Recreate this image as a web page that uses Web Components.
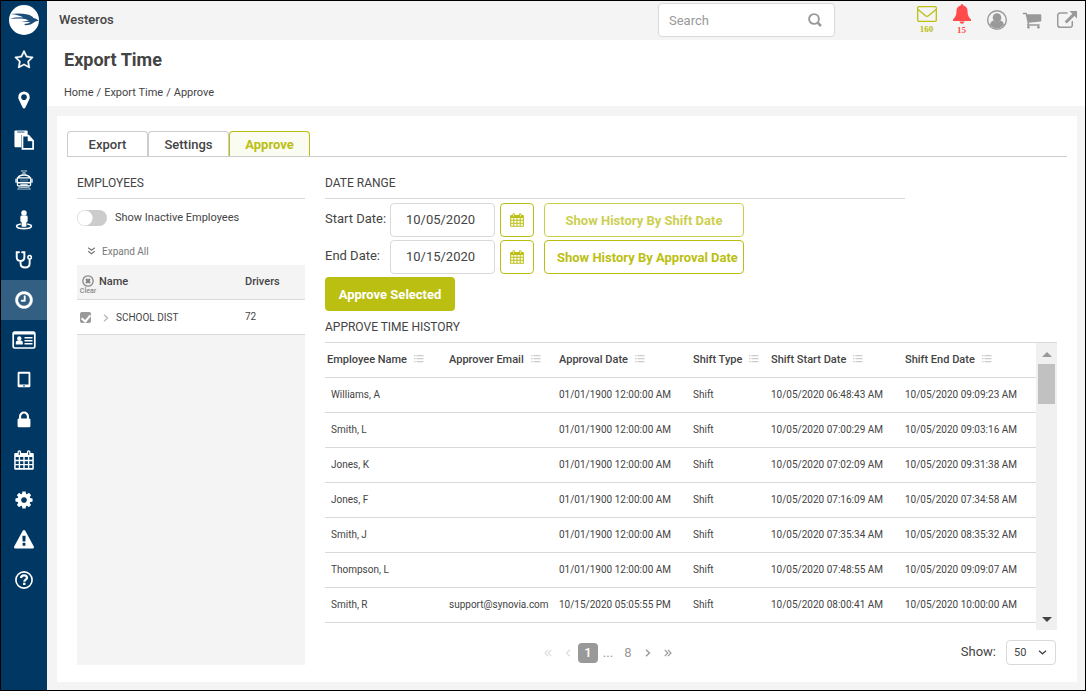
<!DOCTYPE html>
<html lang="en">
<head>
<meta charset="utf-8">
<title>Export Time</title>
<style>
  html { --navy: #003863; --olive: #bbbf12; --line: #d9d9d9; --grey: #f4f4f4; --muted: #999; }
  body { margin: 0; font: 11px/16px Roboto, sans-serif; color: #444; }
</style>
</head>
<body>
<app-shell>
  <side-nav slot="nav"></side-nav>
  <top-bar slot="top">Westeros</top-bar>
  <page-heading slot="heading">Export Time</page-heading>
  <tab-strip></tab-strip>
  <split-view>
    <employee-panel slot="left"></employee-panel>
    <date-range></date-range>
    <history-table></history-table>
    <table-footer></table-footer>
  </split-view>
</app-shell>

<script>
const ICONS = {
  star: ['0 0 1792 1792', '<path d="M1201 1004l306-297-422-62-189-382-189 382-422 62 306 297-73 421 378-199 377 199zm527-357q0 22-26 48l-363 354 86 500q1 7 1 20 0 50-41 50-19 0-40-12l-449-236-449 236q-22 12-40 12-21 0-31.500-14.500t-10.500-35.500q0-6 2-20l86-500-364-354q-25-27-25-48 0-37 56-46l502-73 225-455q19-41 49-41t49 41l225 455 502 73q56 9 56 46z" stroke="currentColor" stroke-width="30"/>'],
  marker: ['0 0 1792 1792', '<path d="M1152 640q0-106-75-181t-181-75-181 75-75 181 75 181 181 75 181-75 75-181zm256 0q0 109-33 179l-364 774q-16 33-47.500 52t-67.500 19-67.500-19-46.500-52l-365-774q-33-70-33-179 0-212 150-362t362-150 362 150 150 362z"/>'],
  paste: ['0 0 22 22', '<path d="M1.500 .5h12.500a1 1 0 0 1 1 1v4h-7v13.500h-6.500a1 1 0 0 1-1-1v-16.500a1 1 0 0 1 1-1z"/><path d="M3.500 1.500h8v1.500h-8z" fill="#5f87a6"/><path d="M9.300 6.300h6.700l5 5.500v8.900h-11.700z" fill="#003863" stroke="currentColor" stroke-width="1.900"/><path d="M15.300 6v6h6z" stroke="currentColor" stroke-width=".5"/>'],
  train: ['0 0 22 22', '<g fill="none" stroke="currentColor"><path d="M7.500 1h7M8.500 1.500l2.500 2 2.500-2M8.500 5l2.500-1.800 2.500 1.800" stroke-width=".9" opacity=".8"/><path d="M4.500 9q.5-3.500 6.500-3.500t6.500 3.500" stroke-width="1.500"/><path d="M3.700 8.700h14.600v7.300q0 1.500-1.500 1.500h-11.600q-1.500 0-1.500-1.500z" stroke-width="1.300"/><path d="M6 18l-1 2.500M16 18l1 2.500M3.500 21h15M6 19.300h10" stroke-width=".9" opacity=".8"/></g><path d="M6.500 10h9v3.500h-9z" opacity=".2"/><path d="M4 13.300h14v1.500h-14zM7 15.800h8v1.500h-8zM1.500 9.500h1.500v4.500h-1.500zM19 9.500h1.500v4.500h-1.500z"/>'],
  street: ['0 0 22 22', '<circle cx="11" cy="3.300" r="3"/><path d="M8.500 6h5q1.500 0 1.500 1.500v5q0 .8-1.300.8v4.200q0 .8-.8.800h-3.800q-.8 0-.8-.8v-4.200q-1.300 0-1.300-.8v-5q0-1.500 1.500-1.500z"/><path d="M7.500 15.300c-8 1.500-5 5.200 3.500 5.200s11.500-3.700 3.500-5.200" fill="none" stroke="currentColor" stroke-width="1.700"/>'],
  steth: ['0 0 22 22', '<g fill="none" stroke="currentColor" stroke-width="2.100" stroke-linecap="round"><path d="M5.500 2.500h-2.500v5.500q0 4 4.200 4t4.200-4v-5.500h-2.500"/><path d="M7.200 12v2.500q0 4.700 5 4.700t5-4.700v-4"/><circle cx="17.200" cy="8" r="1.900" stroke-width="1.700"/></g>'],
  clock: ['0 0 1792 1792', '<path d="M1024 544v448q0 14-9 23t-23 9h-320q-14 0-23-9t-9-23v-64q0-14 9-23t23-9h224v-352q0-14 9-23t23-9h64q14 0 23 9t9 23zm416 352q0-148-73-273t-198-198-273-73-273 73-198 198-73 273 73 273 198 198 273 73 273-73 198-198 73-273zm224 0q0 209-103 385.500t-279.500 279.500-385.500 103-385.500-103-279.500-279.500-103-385.500 103-385.500 279.500-279.500 385.500-103 385.500 103 279.500 279.500 103 385.500z" stroke="currentColor" stroke-width="40"/>'],
  idcard: ['0 0 24 20', '<rect x="1.200" y="2" width="21.600" height="16" rx="1.500" fill="none" stroke="currentColor" stroke-width="1.700"/><path d="M1 2h22v2.500h-22z"/><circle cx="7.300" cy="8.500" r="2.200"/><path d="M3.800 14.500v-2q0-2 2-2h3q2 0 2 2v2zM12.500 7h8v1.400h-8zM12.500 10h8v1.400h-8zM12.500 13h8v1.400h-8z"/>'],
  tablet: ['0 0 22 22', '<path fill-rule="evenodd" d="M5.500 2h11a1.500 1.500 0 0 1 1.500 1.500v14a1.500 1.500 0 0 1-1.500 1.500h-11a1.500 1.500 0 0 1-1.500-1.500v-14a1.500 1.500 0 0 1 1.500-1.500zM6 4v12h10v-12zM10.200 16.900v1.200h1.600v-1.200z"/>'],
  lock: ['0 0 1792 1792', '<path d="M640 768h512v-192q0-106-75-181t-181-75-181 75-75 181v192zm832 96v576q0 40-28 68t-68 28h-960q-40 0-68-28t-28-68v-576q0-40 28-68t68-28h32v-192q0-184 132-316t316-132 316 132 132 316v192h32q40 0 68 28t28 68z"/>'],
  calendar: ['0 0 20 20', '<path fill-rule="evenodd" d="M1.500 3h2v-1a1.800 1.800 0 0 1 3.600 0v1h5.800v-1a1.800 1.800 0 0 1 3.600 0v1h2a1.300 1.300 0 0 1 1.300 1.300v14.200a1.300 1.300 0 0 1-1.300 1.300h-17a1.300 1.300 0 0 1-1.300-1.300v-14.200a1.300 1.300 0 0 1 1.300-1.300zM4.800 1.700v3.300h1v-3.300zM14.200 1.700v3.300h1v-3.300zM1.700 7v2.800h3v-2.800zM6.100 7v2.800h3.200v-2.800zM10.700 7v2.800h3.200v-2.800zM15.300 7v2.800h3v-2.800zM1.700 11.200v2.700h3v-2.700zM6.100 11.200v2.700h3.200v-2.700zM10.700 11.200v2.700h3.200v-2.700zM15.300 11.200v2.700h3v-2.700zM1.700 15.300v2.800h3v-2.800zM6.100 15.300v2.800h3.200v-2.800zM10.700 15.300v2.800h3.200v-2.800zM15.300 15.300v2.800h3v-2.800z"/>'],
  cog: ['0 0 1792 1792', '<path d="M1152 896q0-106-75-181t-181-75-181 75-75 181 75 181 181 75 181-75 75-181zm512-109v222q0 12-8 23t-20 13l-185 28q-19 54-39 91 35 50 107 138 10 12 10 25t-9 23q-27 37-99 108t-94 71q-12 0-26-9l-138-108q-44 23-91 38-16 136-29 186-7 28-36 28h-222q-14 0-24.500-8.500t-11.500-21.500l-28-184q-49-16-90-37l-141 107q-10 9-25 9-14 0-25-11-126-114-165-168-7-10-7-23 0-12 8-23 15-21 51-66.500t54-70.500q-27-50-41-99l-183-27q-13-2-21-12.500t-8-23.500v-222q0-12 8-23t19-13l186-28q14-46 39-92-40-57-107-138-10-12-10-24 0-10 9-23 26-36 98.500-107.500t94.500-71.500q13 0 26 10l138 107q44-23 91-38 16-136 29-186 7-28 36-28h222q14 0 24.500 8.500t11.500 21.500l28 184q49 16 90 37l142-107q9-9 24-9 13 0 25 10 129 119 165 170 7 8 7 22 0 12-8 23-15 21-51 66.500t-54 70.500q26 50 41 98l183 28q13 2 21 12.500t8 23.500z"/>'],
  warning: ['0 0 1792 1792', '<path d="M1024 1375v-190q0-14-9.500-23.500t-22.500-9.500h-192q-13 0-22.500 9.500t-9.500 23.500v190q0 14 9.500 23.500t22.500 9.500h192q13 0 22.500-9.500t9.500-23.500zm-2-374l18-459q0-12-10-19-13-11-24-11h-220q-11 0-24 11-10 7-10 21l17 457q0 10 10 16.500t24 6.500h185q14 0 23.500-6.500t10.500-16.500zm-14-934l768 1408q35 63-2 126-17 29-46.500 46t-63.500 17h-1536q-34 0-63.500-17t-46.500-46q-37-63-2-126l768-1408q17-31 47-49t65-18 65 18 47 49z"/>'],
  help: ['0 0 22 22', '<circle cx="11" cy="11" r="8.900" fill="none" stroke="currentColor" stroke-width="1.800"/><path d="M7.600 8.800q.4-2.900 3.400-2.900t3.300 2.600c0 2.100-2.900 2.200-2.900 4.300" fill="none" stroke="currentColor" stroke-width="2.400"/><rect x="10" y="14" width="2.600" height="2.500"/>'],
  mail: ['0 0 20 16', '<rect x=".7" y=".7" width="18.600" height="14.600" rx="1.200" fill="none" stroke="currentColor" stroke-width="1.300"/><path d="M1 3.500l7.500 6.300q1.500 1.200 3 0l7.500-6.300" fill="none" stroke="currentColor" stroke-width="1.300"/>'],
  bell: ['0 0 20 20', '<path d="M10 0q1.300 0 1.300 1.500 4.200 1 4.200 5.500 0 5.500 3.500 8.500v1.500h-18v-1.500q3.500-3 3.500-8.500 0-4.500 4.200-5.500 0-1.500 1.300-1.500zM7.500 17.500h5q-.5 2.300-2.500 2.300t-2.500-2.300z"/>'],
  user: ['0 0 20 20', '<circle cx="10" cy="10" r="9.300" fill="none" stroke="currentColor" stroke-width="1.400"/><ellipse cx="10" cy="7.800" rx="4.300" ry="4.600"/><path d="M3 15.200q.5-3.700 3.200-4.600 3.800 3.400 7.600 0 2.700.9 3.200 4.600-7 6-14 0z"/>'],
  cart: ['0 0 1792 1792', '<path d="M704 1536q0 52-38 90t-90 38-90-38-38-90 38-90 90-38 90 38 38 90zm896 0q0 52-38 90t-90 38-90-38-38-90 38-90 90-38 90 38 38 90zm128-1088v512q0 24-16.500 42.500t-40.500 21.500l-1044 122q13 60 13 70 0 16-24 64h920q26 0 45 19t19 45-19 45-45 19h-1024q-26 0-45-19t-19-45q0-11 8-31.500t16-36 21.500-40 15.500-29.500l-177-823h-204q-26 0-45-19t-19-45 19-45 45-19h256q16 0 28.500 6.500t19.500 15.500 13 24.500 8 26 5.500 29.500 4.500 26h1201q26 0 45 19t19 45z"/>'],
  external: ['0 0 20 18', '<path d="M10.500 2h-7.500a2.300 2.300 0 0 0-2.300 2.300v9.700a2.300 2.300 0 0 0 2.300 2.300h10a2.300 2.300 0 0 0 2.300-2.300v-4" fill="none" stroke="currentColor" stroke-width="1.500"/><path d="M12.500 0h7.500v7.500l-2.500-2.500-7.800 7.500-2-2 7.600-7.700z"/>'],
  search: ['0 0 14 14', '<circle cx="6" cy="6" r="4.900" fill="none" stroke="currentColor" stroke-width="1.900"/><path d="M9.600 9.600l3.400 3.400" stroke="currentColor" stroke-width="2.500"/>'],
  list: ['0 0 10 8', '<path d="M0 0h1.500v1.200h-1.500zM2.500 0h7v1.200h-7zM0 3h1.500v1.200h-1.500zM2.500 3h7v1.200h-7zM0 6h1.500v1.200h-1.500zM2.500 6h7v1.200h-7z"/>'],
  down2: ['0 0 8 8', '<path d="M.7.7l3.300 2.500 3.300-2.500M.7 4.200l3.300 2.500 3.300-2.500" fill="none" stroke="currentColor" stroke-width="1.200"/>'],
  clear: ['0 0 12 12', '<circle cx="6" cy="6" r="5.200" fill="none" stroke="currentColor" stroke-width="1.300"/><path d="M4 4l4 4M8 4l-4 4" stroke="currentColor" stroke-width="2.200"/><rect x="4" y="4" width="4" height="4" opacity=".5"/>'],
  right: ['0 0 8 8', '<path d="M2 .8l3.500 3.200-3.500 3.200" fill="none" stroke="currentColor" stroke-width="1.400"/>'],
  left: ['0 0 8 8', '<path d="M6 .8l-3.500 3.200 3.500 3.200" fill="none" stroke="currentColor" stroke-width="1.200"/>'],
  right2: ['0 0 8 8', '<path d="M.8.8l3 3.200-3 3.200M4 .8l3 3.200-3 3.200" fill="none" stroke="currentColor" stroke-width="1.200"/>'],
  left2: ['0 0 8 8', '<path d="M4 .8l-3 3.200 3 3.200M7.200.8l-3 3.200 3 3.200" fill="none" stroke="currentColor" stroke-width="1.200"/>'],
  down: ['0 0 10 8', '<path d="M1 2l4 3.500 4-3.500" fill="none" stroke="currentColor" stroke-width="1.400"/>'],
  logo: ['0 0 30 30', '<circle cx="15" cy="15" r="15"/><path d="M1.500 9q10-1 17 .5 4.500 1 6 3.500 2.500.3 5.300 2.700-3.300.3-5 1.800-2.500 2.500-8.300 2.700l-1.500-1.200q4-.2 6.500-1.800-5-.2-9.500-1.200 4 .2 8-.6-3.500-1.700-8.500-1.800-5 0-10.800.2 6-1.700 13.500-1.400-3.500-2.300-12.700-3.400z" fill="#1d4e7a"/>']
};

/* Registers an element whose shadow root is cloned from a template. */
function define(tag, css, html, setup) {
  const tpl = document.createElement('template');
  tpl.innerHTML = '<style>*{box-sizing:border-box}button,input,select{font:inherit;color:inherit;margin:0}' + css + '</style>' + html;
  customElements.define(tag, class extends HTMLElement {
    constructor() {
      super();
      this.attachShadow({ mode: 'open' }).append(tpl.content.cloneNode(true));
    }
    connectedCallback() { if (setup) setup(this, this.shadowRoot); }
  });
}

define('ui-icon', ':host{display:inline-flex;width:20px;height:20px;flex:none}svg{width:100%;height:100%;fill:currentColor}',
  '<svg aria-hidden="true"></svg>', (el, root) => {
    const [box, body] = ICONS[el.getAttribute('name')];
    const svg = root.querySelector('svg');
    svg.setAttribute('viewBox', box);
    svg.innerHTML = body;
  });

define('section-title', ':host{display:block;font-size:12px;line-height:16px;padding:8px 0 7px;border-bottom:1px solid var(--line)}h2{font:inherit;margin:0}',
  '<h2><slot></slot></h2>');

define('app-shell', `
  :host{display:grid;grid-template:auto auto 1fr/46px 1fr;min-height:100vh;box-sizing:border-box;border:1px solid #000;background:var(--grey)}
  .nav{grid-row:1/4;background:var(--navy)}
  main{padding:10px 8px 8px 10px;display:flex;min-width:0}
  .card{flex:1;min-width:0;background:#fff;padding:15px 10px 17px;display:flex;flex-direction:column}`, `
  <div class="nav"><slot name="nav"></slot></div>
  <slot name="top"></slot><slot name="heading"></slot>
  <main><div class="card"><slot></slot></div></main>`);

define('side-nav', `
  :host{display:block;color:#fff}
  nav{display:flex;flex-direction:column}
  a{height:40px;display:flex;align-items:center;justify-content:center;color:inherit}
  a.logo{height:39px;padding-bottom:1px}
  a.on{background:#335f82}
  .logo ui-icon{width:30px;height:30px}
  .wide{width:24px}`, '<nav aria-label="Main"></nav>', (el, root) => {
    const items = ['star:Favorites', 'marker:Map', 'paste:Reports', 'train:Fleet', 'street:Riders', 'steth:Diagnostics', 'clock:Time', 'idcard:Drivers', 'tablet:Devices', 'lock:Security', 'calendar:Calendar', 'cog:Settings', 'warning:Alerts', 'help:Help'];
    root.querySelector('nav').innerHTML = '<a class="logo" href="#" aria-label="Start"><ui-icon name="logo"></ui-icon></a>' +
      items.map(i => { const [n, t] = i.split(':');
        return `<a href="#" aria-label="${t}"${n === 'clock' ? ' class="on"' : ''}><ui-icon name="${n}"${n === 'idcard' ? ' class="wide"' : ''}></ui-icon></a>`; }).join('');
  });

define('top-bar', `
  :host{display:flex;align-items:center;height:39px;box-sizing:border-box;padding:0 1px 2px 12px}
  b{flex:1;font-size:13px;font-weight:500}
  .search{width:177px;height:34px;display:flex;align-items:center;background:#fff;border:1px solid var(--line);border-radius:4px;padding:0 12px 0 10px;color:var(--muted);margin-right:74px}
  input{flex:1;min-width:0;border:0;padding:2px 0 0;background:none;outline:0;font-size:13px}
  input::placeholder{color:var(--muted);opacity:1}
  .search ui-icon{width:14px;height:14px}
  nav{display:flex;color:var(--muted)}
  a{width:35px;height:37px;display:flex;flex-direction:column;align-items:center;justify-content:center;color:inherit;text-decoration:none;font:bold 9px/12px "Liberation Serif",serif}
  .mail{color:var(--olive)}.mail ui-icon{height:18px}
  .bell{color:#ff4b4b}.bell ui-icon{height:20px}`, `
  <b><slot></slot></b>
  <div class="search"><input type="text" placeholder="Search" aria-label="Search"><ui-icon name="search"></ui-icon></div>
  <nav aria-label="Account">
    <a class="mail" href="#" aria-label="Messages"><ui-icon name="mail"></ui-icon><span>160</span></a>
    <a class="bell" href="#" aria-label="Alerts"><ui-icon name="bell"></ui-icon><span>15</span></a>
    <a href="#" aria-label="Profile"><ui-icon name="user"></ui-icon></a>
    <a href="#" aria-label="Cart"><ui-icon name="cart"></ui-icon></a>
    <a href="#" aria-label="Open"><ui-icon name="external"></ui-icon></a>
  </nav>`);

define('page-heading', `
  :host{display:block;background:#fff;padding:8px 17px 5px}
  h1{margin:0 0 13px;font-size:18px;line-height:24px;font-weight:700}
  nav{display:flex;gap:3px}
  a{color:inherit;text-decoration:none}`, `
  <h1><slot></slot></h1>
  <nav aria-label="Breadcrumb"><a href="#">Home</a><span>/</span><a href="#">Export Time</a><span>/</span><a href="#">Approve</a></nav>`);

define('tab-strip', `
  :host{display:block;border-bottom:1px solid #ccc}
  div{display:flex}
  button{width:81px;height:25px;padding:2px 0 0;background:#fff;border:1px solid #ccc;border-bottom:0;border-radius:4px 4px 0 0;font-size:13px;font-weight:500}
  .on{color:var(--olive);border-color:var(--olive);background:#fafbf1;font-weight:700}`, `
  <div role="tablist"><button role="tab">Export</button><button role="tab">Settings</button><button role="tab" class="on" aria-selected="true">Approve</button></div>`);

define('split-view', `
  :host{display:grid;flex:1;grid-template-columns:228px minmax(0,1fr);gap:20px;padding:10px 10px 0}
  .left{display:flex}.left ::slotted(*){flex:1}`, `
  <div class="left"><slot name="left"></slot></div><div><slot></slot></div>`);

define('employee-panel', `
  :host{display:flex;flex-direction:column}
  .toggle{display:flex;align-items:center;gap:8px;height:38px}
  .toggle input{appearance:none;width:30px;height:16px;border-radius:8px;background:radial-gradient(circle at 8px 8px,#fff 7px,#ccc 8px)}
  .expand{align-self:flex-start;display:flex;align-items:center;gap:6px;height:28px;padding:2px 0 0;margin-left:10px;border:0;background:none;color:#777;font-size:10px}
  .expand ui-icon{width:9px;height:8px;margin-bottom:2px}
  .box{flex:1;background:var(--grey)}
  table{width:100%;border-collapse:separate;border-spacing:0;table-layout:fixed}
  th,td{height:35px;padding:0;border-bottom:1px solid var(--line);text-align:left;font-weight:400}
  th{font-weight:500}
  td{background:#fff;font-size:10px}
  th:first-child,td:first-child{padding-left:3px}
  td:first-child{padding-top:1px}
  td div,th div{display:flex;align-items:center}
  .clear{display:flex;flex-direction:column;align-items:center;padding:5px 0 0;width:16px;border:0;background:none;color:#888;font-size:7px;line-height:8px}
  .clear ui-icon{width:12px;height:12px}
  th span{margin-left:3px}
  td input{appearance:none;width:11px;height:11px;border-radius:2px;background:var(--muted);display:flex;justify-content:center;padding-top:1px}
  td input:checked::after{content:"";width:4px;height:7px;border:solid #fff;border-width:0 2px 2px 0;transform:rotate(40deg)}
  td ui-icon{width:8px;height:8px;color:#bbb;margin:0 6px 0 11px}`, `
  <section-title>EMPLOYEES</section-title>
  <div class="toggle"><input type="checkbox" role="switch" id="inactive"><label for="inactive">Show Inactive Employees</label></div>
  <button class="expand"><ui-icon name="down2"></ui-icon>Expand All</button>
  <div class="box"><table>
    <colgroup><col><col style="width:60px"></colgroup>
    <tr><th><div><button class="clear"><ui-icon name="clear"></ui-icon>Clear</button><span>Name</span></div></th><th>Drivers</th></tr>
    <tr><td><div><input type="checkbox" checked id="d1"><ui-icon name="right"></ui-icon><label for="d1">SCHOOL DIST</label></div></td><td>72</td></tr>
  </table></div>`);

define('date-range', `
  :host{display:block}
  section-title{max-width:580px}
  .form{display:grid;grid-template-columns:65px 110px 44px 200px;row-gap:3px;padding:4px 0 3px}
  label{font-size:13px;line-height:32px;white-space:nowrap}
  input,button{height:34px;border-radius:4px;font-size:13px}
  input{width:105px;border:1px solid var(--line);text-align:center;padding:0 4px 2px 0}
  .cal,.show{background:#fff;border:1px solid var(--olive);color:var(--olive)}
  .cal{display:flex;align-items:center;justify-content:center;padding:0;width:34px}
  .cal ui-icon{width:14px;height:14px}
  .show{padding:2px 12px 0;font-weight:700;white-space:nowrap}
  .dim{opacity:.75}
  .go{background:var(--olive);color:#fff;border:0;font-weight:700;width:130px;padding:2px 0 0}`, `
  <section-title>DATE RANGE</section-title>
  <div class="form">
    <label for="from">Start Date:</label><input id="from" type="text" value="10/05/2020"><button class="cal" aria-label="Pick start date"><ui-icon name="calendar"></ui-icon></button><button class="show dim">Show History By Shift Date</button>
    <label for="to">End Date:</label><input id="to" type="text" value="10/15/2020"><button class="cal" aria-label="Pick end date"><ui-icon name="calendar"></ui-icon></button><button class="show">Show History By Approval Date</button>
  </div>
  <button class="go">Approve Selected</button>`);

define('history-table', `
  :host{display:block}
  .frame{display:flex}
  .rows{flex:1;min-width:0}
  table{width:100%;table-layout:fixed;border-collapse:separate;border-spacing:0}
  th,td{height:35px;padding:0 0 0 2px;border-bottom:1px solid var(--line);text-align:left;white-space:nowrap}
  th{font-weight:500}
  td{font-size:10px}
  td:first-child{padding-left:6px}
  th ui-icon{width:10px;height:8px;color:#ccc;margin-left:7px}
  .bar{width:21px;height:287px;background:#f0f0f0;display:flex;flex-direction:column;align-items:center;padding:9px 0 8px}
  .up,.dn{border:5px solid transparent;border-top:0;border-bottom:5px solid #999}
  .dn{border-top:5px solid #444;border-bottom:0;margin-top:auto}
  .thumb{width:17px;height:40px;background:#c1c1c1;margin-top:7px}`, `
  <section-title>APPROVE TIME HISTORY</section-title>
  <div class="frame"><div class="rows"><table>
    <colgroup><col style="width:122px"><col style="width:110px"><col style="width:134px"><col style="width:78px"><col style="width:134px"><col></colgroup>
    <thead><tr></tr></thead><tbody></tbody></table></div>
    <div class="bar" aria-hidden="true"><div class="up"></div><div class="thumb"></div><div class="dn"></div></div>
  </div>`, (el, root) => {
    root.querySelector('thead tr').innerHTML = ['Employee Name', 'Approver Email', 'Approval Date', 'Shift Type', 'Shift Start Date', 'Shift End Date']
      .map(t => `<th scope="col">${t}<ui-icon name="list"></ui-icon></th>`).join('');
    const none = '01/01/1900 12:00:00 AM';
    root.querySelector('tbody').innerHTML = [
      ['Williams, A', '', none, '06:48:43', '09:09:23'],
      ['Smith, L', '', none, '07:00:29', '09:03:16'],
      ['Jones, K', '', none, '07:02:09', '09:31:38'],
      ['Jones, F', '', none, '07:16:09', '07:34:58'],
      ['Smith, J', '', none, '07:35:34', '08:35:32'],
      ['Thompson, L', '', none, '07:48:55', '09:09:07'],
      ['Smith, R', 'support@synovia.com', '10/15/2020 05:05:55 PM', '08:00:41', '10:00:00']
    ].map(([n, m, a, s, e]) => `<tr><td>${n}</td><td>${m}</td><td>${a}</td><td>Shift</td><td>10/05/2020 ${s} AM</td><td>10/05/2020 ${e} AM</td></tr>`).join('');
  });

define('table-footer', `
  :host{display:grid;grid-template-columns:1fr 166px;align-items:center;padding-top:10px;font-size:13px}
  nav{display:flex;justify-content:center;color:var(--muted);padding-top:1px}
  nav button,nav span{width:20px;height:20px;padding:0;border:0;background:none;display:flex;align-items:center;justify-content:center}
  nav ui-icon{width:8px;height:8px}
  button:disabled{color:#ddd}
  .on{background:var(--muted);color:#fff;border-radius:4px;font-weight:500}
  .size{display:flex;justify-content:flex-end;align-items:center;gap:10px;padding-right:1px}
  .size label{padding-bottom:2px}
  .pick{display:grid;align-items:center}
  select{grid-area:1/1;appearance:none;width:50px;height:25px;border:1px solid var(--line);border-radius:4px;background:#fff;padding:0 7px;font-size:11px}
  .pick ui-icon{grid-area:1/1;justify-self:end;width:9px;height:7px;margin-right:9px;pointer-events:none}`, `
  <nav aria-label="Pages">
    <button disabled aria-label="First"><ui-icon name="left2"></ui-icon></button>
    <button disabled aria-label="Previous"><ui-icon name="left"></ui-icon></button>
    <button class="on">1</button><span>...</span><button>8</button>
    <button aria-label="Next"><ui-icon name="right"></ui-icon></button>
    <button aria-label="Last"><ui-icon name="right2"></ui-icon></button>
  </nav>
  <div class="size"><label for="n">Show:</label><div class="pick"><select id="n"><option>50</option></select><ui-icon name="down"></ui-icon></div></div>`);
</script>
</body>
</html>
